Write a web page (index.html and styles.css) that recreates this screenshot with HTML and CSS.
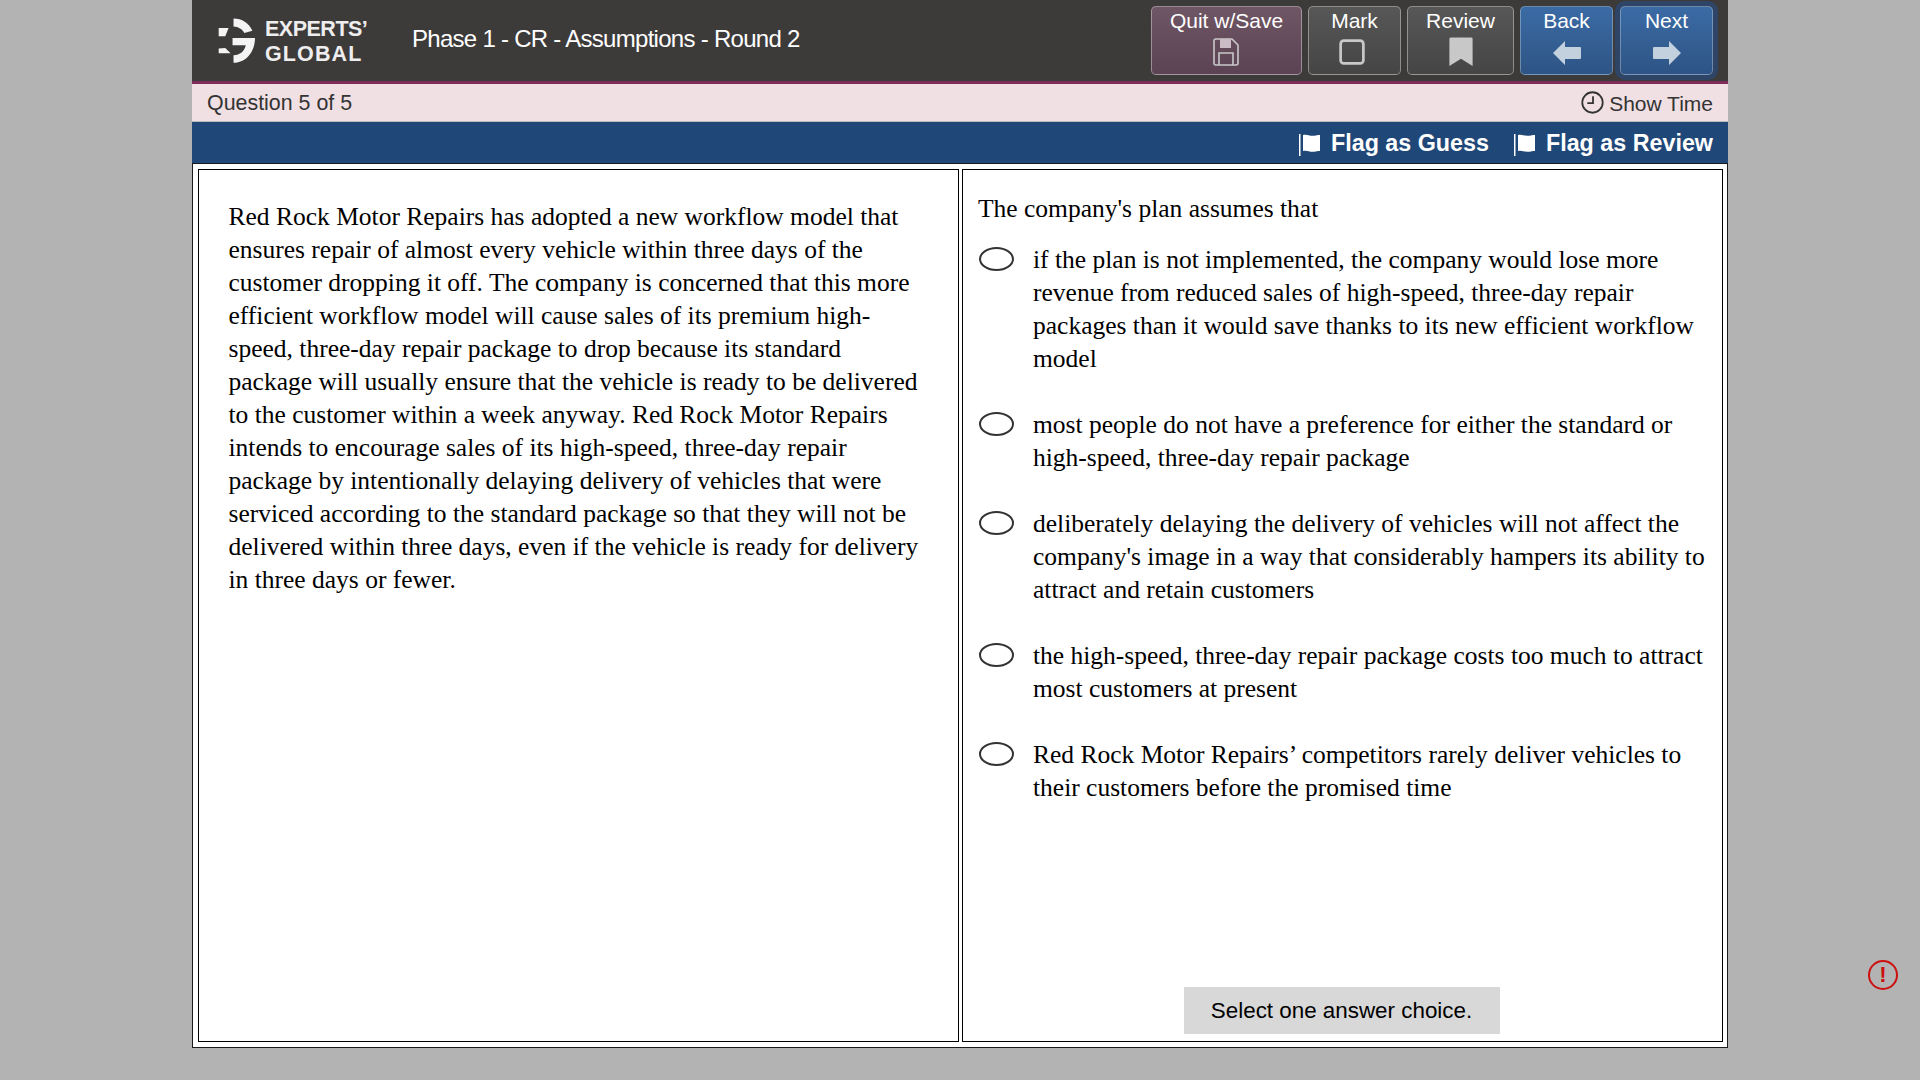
FILE: index.html
```html
<!DOCTYPE html>
<html lang="en">
<head>
<meta charset="utf-8">
<title>Phase 1 - CR - Assumptions - Round 2</title>
<link rel="stylesheet" href="styles.css">
</head>
<body>
<div class="frame">
  <header class="topbar">
    <div class="logo">
      <svg class="logo-mark" viewBox="38 30 112 135" aria-hidden="true">
        <path d="M85 31C110 31 132 45 142 68L118 75C112 63 100 56 85 55Z"/>
        <path d="M40 60L70 60L60 85L40 85Z"/>
        <path d="M82 90L150 90C150 130 125 165 85 165L85 142C105 142 118 130 122 112L82 112Z"/>
        <path d="M40 122L60 120L76 136L40 136Z"/>
      </svg>
      <div class="logo-text"><div class="logo-top">EXPERTS’</div><div class="logo-bottom">GLOBAL</div></div>
    </div>
    <div class="title">Phase 1 - CR - Assumptions - Round 2</div>
    <nav class="actions">
      <button class="btn btn-quit">Quit w/Save
        <svg class="ico ico-save" viewBox="0 0 26 28" aria-hidden="true"><path class="ico-line" d="M1 3a2 2 0 0 1 2-2h16l6 6v18a2 2 0 0 1-2 2H3a2 2 0 0 1-2-2Z"/><path class="ico-fill" d="M7 1h11v9H7z"/><path class="ico-line" d="M6 27V15h14v12"/></svg>
      </button>
      <button class="btn btn-mark">Mark
        <svg class="ico ico-square" viewBox="0 0 24 24" aria-hidden="true"><rect class="ico-box" x="1.5" y="1.5" width="21" height="21" rx="3"/></svg>
      </button>
      <button class="btn btn-review">Review
        <svg class="ico ico-tall" viewBox="0 0 24 30" aria-hidden="true"><path class="ico-fill" d="M0 2a1.500 1.500 0 0 1 1.500-1.500h21A1.500 1.500 0 0 1 24 2v28l-12-7.500L0 30Z"/></svg>
      </button>
      <button class="btn btn-blue">Back
        <svg class="ico ico-arrow" viewBox="0 0 28 24" aria-hidden="true"><path class="ico-fill" d="M0 12L12 0v6h15a1 1 0 0 1 1 1v10a1 1 0 0 1-1 1H12v6Z"/></svg>
      </button>
      <button class="btn btn-blue btn-focus">Next
        <svg class="ico ico-arrow" viewBox="0 0 28 24" aria-hidden="true"><path class="ico-fill" d="M28 12L16 0v6H1a1 1 0 0 0-1 1v10a1 1 0 0 0 1 1h15v6Z"/></svg>
      </button>
    </nav>
  </header>
  <div class="statusbar">
    <span>Question 5 of 5</span>
    <span class="timer">
      <svg class="clock" viewBox="0 0 22 22" aria-hidden="true"><circle cx="11" cy="11" r="9.800"/><path d="M11.500 5v6.500H6"/></svg>
      Show Time
    </span>
  </div>
  <div class="flagbar">
    <span class="flag"><svg class="flag-ico" viewBox="0 0 23 24" aria-hidden="true"><path d="M1 2h1.500v22H1zM5 3c4-1 6 .8 9 .8s5-.8 8-.8v16c-3 0-5 .8-8 .8s-5-1.800-9-.8Z"/></svg>Flag as Guess</span>
    <span class="flag"><svg class="flag-ico" viewBox="0 0 23 24" aria-hidden="true"><path d="M1 2h1.500v22H1zM5 3c4-1 6 .8 9 .8s5-.8 8-.8v16c-3 0-5 .8-8 .8s-5-1.800-9-.8Z"/></svg>Flag as Review</span>
  </div>
  <main class="content">
    <section class="panel panel-passage">
      <p>Red Rock Motor Repairs has adopted a new workflow model that ensures repair of almost every vehicle within three days of the customer dropping it off. The company is concerned that this more efficient workflow model will cause sales of its premium high-speed, three-day repair package to drop because its standard package will usually ensure that the vehicle is ready to be delivered to the customer within a week anyway. Red Rock Motor Repairs intends to encourage sales of its high-speed, three-day repair package by intentionally delaying delivery of vehicles that were serviced according to the standard package so that they will not be delivered within three days, even if the vehicle is ready for delivery in three days or fewer.</p>
    </section>
    <section class="panel panel-question">
      <p class="stem">The company's plan assumes that</p>
      <ul class="options">
        <li class="option"><span class="radio"></span><span>if the plan is not implemented, the company would lose more revenue from reduced sales of high-speed, three-day repair packages than it would save thanks to its new efficient workflow model</span></li>
        <li class="option"><span class="radio"></span><span>most people do not have a preference for either the standard or high-speed, three-day repair package</span></li>
        <li class="option"><span class="radio"></span><span>deliberately delaying the delivery of vehicles will not affect the company's image in a way that considerably hampers its ability to attract and retain customers</span></li>
        <li class="option"><span class="radio"></span><span>the high-speed, three-day repair package costs too much to attract most customers at present</span></li>
        <li class="option"><span class="radio"></span><span>Red Rock Motor Repairs’ competitors rarely deliver vehicles to their customers before the promised time</span></li>
      </ul>
      <div class="hint">Select one answer choice.</div>
    </section>
  </main>
</div>
<div class="alert">!</div>
</body>
</html>
```

FILE: styles.css
```css
* { box-sizing: border-box; }
html, body { margin: 0; height: 100%; }
body { background: #b3b3b3; font-family: "Liberation Sans", Arial, sans-serif; overflow: hidden; }
.frame { width: 1536px; height: 1048px; margin: 0 auto; display: flex; flex-direction: column; }
.topbar { height: 84px; flex: none; background: #3d3a3a; border-bottom: 3px solid #7f2d58; display: flex; align-items: flex-start; color: #fff; }
.logo { display: flex; align-items: flex-start; gap: 10px; margin: 18px 0 0 26px; width: 194px; }
.logo-mark { width: 37px; height: 45px; fill: #f4f4f4; flex: none; }
.logo-text { font-family: "Liberation Sans", Arial, sans-serif; font-weight: 700; font-size: 21.500px; line-height: 25px; color: #eee; margin-top: -1px; }
.logo-top { letter-spacing: -.5px; }
.logo-bottom { letter-spacing: 1.1px; }
.title { font-size: 24px; line-height: 28px; margin-top: 25px; letter-spacing: -.72px; }
.actions { margin-left: auto; margin-right: 15px; margin-top: 6px; display: flex; gap: 6px; }
.btn { font: 21px/24px "Liberation Sans", Arial, sans-serif; height: 69px; color: #fff; border: 1px solid rgba(255,255,255,.38); border-radius: 5px; padding: 2px 0 0; display: flex; flex-direction: column; align-items: center; width: 93px; }
.btn-quit { width: 151px; background: linear-gradient(#6f5665, #5c4353); }
.btn-mark { background: linear-gradient(#575757, #454545); }
.btn-review { width: 107px; background: linear-gradient(#575757, #454545); }
.btn-blue { background: linear-gradient(#3b6ba5, #2e5484); border-color: rgba(255,255,255,.3); }
.btn-focus { box-shadow: 0 0 0 5px #2f4568; margin-left: 1px; }
.ico { width: 28px; height: 28px; margin-top: 5px; }
.ico-save { width: 26px; margin-right: 1px; }
.ico-square { width: 26px; height: 26px; margin: 6px 6px 0 0; }
.ico-tall { width: 24px; height: 29px; margin-top: 4px; }
.ico-arrow { margin-top: 6px; }
.ico-line { fill: none; stroke: #c9c9c9; stroke-width: 1.600; }
.ico-fill { fill: #c8c8c8; }
.btn-blue .ico-fill { fill: #c3d0de; }
.btn-quit .ico-fill { fill: #c9bcc4; }
.ico-box { fill: none; stroke: #c8c8c8; stroke-width: 2.500; }
.statusbar { height: 38px; flex: none; background: #f0e0e3; border-bottom: 1px solid #bbb; display: flex; align-items: center; justify-content: space-between; padding: 2px 15px 0 15px; font-size: 21.400px; color: #333; }
.timer { display: flex; align-items: center; gap: 5px; font-size: 21px; margin-top: 1px; }
.clock { width: 23px; height: 23px; fill: none; stroke: #333; stroke-width: 1.700; margin-top: -3px; }
.flagbar { height: 41px; flex: none; background: #1f4778; display: flex; justify-content: flex-end; align-items: center; gap: 24px; padding: 2px 15px 0 0; color: #fff; font-size: 23.300px; font-weight: 700; }
.flag { display: flex; align-items: center; gap: 10px; }
.flag-ico { width: 23px; height: 24px; fill: #fff; margin-top: 1px; }
.content { flex: 1; min-height: 0; background: #fff; border: 1px solid #1a1a1a; padding: 5px 4px 5px 5px; display: flex; gap: 3px; font-family: "Liberation Serif", "Times New Roman", serif; font-size: 25.500px; line-height: 33px; color: #000; }
.panel { border: 1px solid #000; min-width: 0; }
.panel p { margin: 0; }
.panel-passage { flex: none; width: 761px; padding: 30px 29px 0 29.500px; }
.panel-question { flex: 1; padding: 22px 13px 7px 15px; display: flex; flex-direction: column; }
.options { list-style: none; margin: 18px 0 0; padding: 0; display: flex; flex-direction: column; gap: 33px; }
.option { display: flex; gap: 19px; }
.radio { flex: none; width: 35px; height: 24px; border: 2px solid #333; border-radius: 50%; margin: 4px 0 0 1px; }
.hint { margin: auto auto 0; width: 316px; height: 47px; background: #d8d8d8; font-family: "Liberation Sans", Arial, sans-serif; font-size: 22.400px; line-height: 48px; text-align: center; color: #000; position: relative; left: -2px; }
.alert { position: absolute; left: 1868px; top: 960px; width: 30px; height: 30px; border: 2px solid #cc0f0f; border-radius: 50%; color: #cc0f0f; font-size: 22px; font-weight: 700; line-height: 26px; text-align: center; }
```
